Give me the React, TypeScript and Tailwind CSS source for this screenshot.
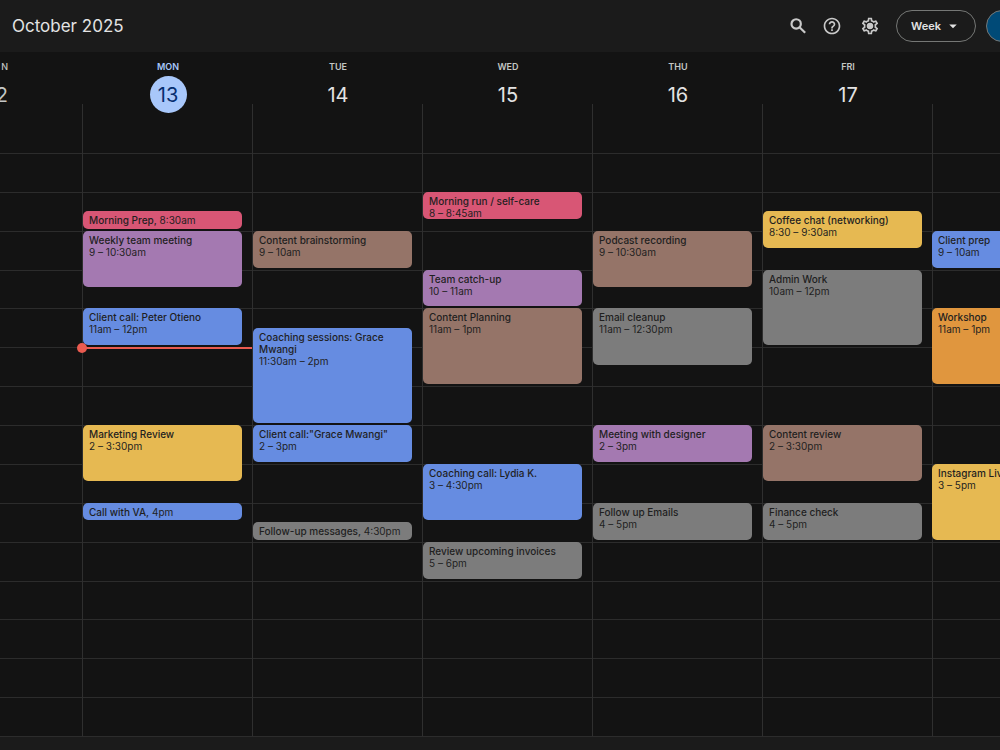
import { MdArrowDropDown, MdHelpOutline, MdOutlineSettings } from 'react-icons/md';

type Color = 'red' | 'purple' | 'blue' | 'brown' | 'gray' | 'yellow' | 'orange';

interface CalendarEvent {
    day: number;
    start: number;
    end: number;
    title: string;
    time: string;
    color: Color;
}

const colors: Record<Color, string> = {
    red: 'bg-[#d85675]',
    purple: 'bg-[#a479b1]',
    blue: 'bg-[#668ce1]',
    brown: 'bg-[#957468]',
    gray: 'bg-[#7c7c7c]',
    yellow: 'bg-[#e6b952]',
    orange: 'bg-[#e0963e]',
};

const days = [
    { name: 'MON', date: 13, today: true },
    { name: 'TUE', date: 14 },
    { name: 'WED', date: 15 },
    { name: 'THU', date: 16 },
    { name: 'FRI', date: 17 },
];

// day is the grid column: 1 = Sunday ... 7 = Saturday
const events: CalendarEvent[] = [
    { day: 2, start: 8.5, end: 9, title: 'Morning Prep', time: '8:30am', color: 'red' },
    { day: 2, start: 9, end: 10.5, title: 'Weekly team meeting', time: '9 – 10:30am', color: 'purple' },
    { day: 2, start: 11, end: 12, title: 'Client call: Peter Otieno', time: '11am – 12pm', color: 'blue' },
    { day: 2, start: 14, end: 15.5, title: 'Marketing Review', time: '2 – 3:30pm', color: 'yellow' },
    { day: 2, start: 16, end: 16.5, title: 'Call with VA', time: '4pm', color: 'blue' },
    { day: 3, start: 9, end: 10, title: 'Content brainstorming', time: '9 – 10am', color: 'brown' },
    { day: 3, start: 11.5, end: 14, title: 'Coaching sessions: Grace Mwangi', time: '11:30am – 2pm', color: 'blue' },
    { day: 3, start: 14, end: 15, title: 'Client call:"Grace Mwangi"', time: '2 – 3pm', color: 'blue' },
    { day: 3, start: 16.5, end: 17, title: 'Follow-up messages', time: '4:30pm', color: 'gray' },
    { day: 4, start: 8, end: 8.75, title: 'Morning run / self-care', time: '8 – 8:45am', color: 'red' },
    { day: 4, start: 10, end: 11, title: 'Team catch-up', time: '10 – 11am', color: 'purple' },
    { day: 4, start: 11, end: 13, title: 'Content Planning', time: '11am – 1pm', color: 'brown' },
    { day: 4, start: 15, end: 16.5, title: 'Coaching call: Lydia K.', time: '3 – 4:30pm', color: 'blue' },
    { day: 4, start: 17, end: 18, title: 'Review upcoming invoices', time: '5 – 6pm', color: 'gray' },
    { day: 5, start: 9, end: 10.5, title: 'Podcast recording', time: '9 – 10:30am', color: 'brown' },
    { day: 5, start: 11, end: 12.5, title: 'Email cleanup', time: '11am – 12:30pm', color: 'gray' },
    { day: 5, start: 14, end: 15, title: 'Meeting with designer', time: '2 – 3pm', color: 'purple' },
    { day: 5, start: 16, end: 17, title: 'Follow up Emails', time: '4 – 5pm', color: 'gray' },
    { day: 6, start: 8.5, end: 9.5, title: 'Coffee chat (networking)', time: '8:30 – 9:30am', color: 'yellow' },
    { day: 6, start: 10, end: 12, title: 'Admin Work', time: '10am – 12pm', color: 'gray' },
    { day: 6, start: 14, end: 15.5, title: 'Content review', time: '2 – 3:30pm', color: 'brown' },
    { day: 6, start: 16, end: 17, title: 'Finance check', time: '4 – 5pm', color: 'gray' },
    { day: 7, start: 9, end: 10, title: 'Client prep', time: '9 – 10am', color: 'blue' },
    { day: 7, start: 11, end: 13, title: 'Workshop', time: '11am – 1pm', color: 'orange' },
    { day: 7, start: 15, end: 17, title: 'Instagram Live', time: '3 – 5pm', color: 'yellow' },
];

const FIRST_HOUR = 7;
const hours = Array.from({ length: 15 }, (_, i) => FIRST_HOUR + i);

// Row 1 is the strip above the first hour, then four rows per hour
const rowOf = (hour: number) => (hour - FIRST_HOUR) * 4 + 2;

const columns = 'grid grid-cols-[minmax(0,82fr)_repeat(5,minmax(0,170fr))_minmax(0,68fr)]';

const SearchIcon = () => (
    <svg viewBox="0 0 24 24" className="h-5 w-5 fill-none stroke-current" strokeWidth="2.6">
        <circle cx="9.8" cy="9.5" r="5.6" />
        <path d="M13.8 13.5 20.6 20.2" />
    </svg>
);

const Header = () => (
    <header className="flex h-[52px] shrink-0 items-center overflow-hidden bg-[#1b1b1b] pl-3 text-[#e3e3e3]">
        <h1 className="pt-0.5 text-[17px]">October 2025</h1>
        <div className="ml-auto flex shrink-0 items-center">
            <button type="button" aria-label="Search" className="mr-3.5 text-[#c9c9c9]">
                <SearchIcon />
            </button>
            <button type="button" aria-label="Help" className="mr-[18px] text-[#c9c9c9]">
                <MdHelpOutline size={20} />
            </button>
            <button type="button" aria-label="Settings" className="relative mr-4 text-[#c9c9c9]">
                <MdOutlineSettings size={20} />
                <span className="absolute inset-[7px] rounded-full bg-current" />
            </button>
            <div className="relative mr-2.5">
                <select
                    aria-label="View"
                    defaultValue="Week"
                    className="h-8 w-20 appearance-none rounded-full border border-[#757775] bg-transparent pl-3.5 text-[11px] font-semibold"
                >
                    <option>Day</option>
                    <option>Week</option>
                    <option>Month</option>
                </select>
                <MdArrowDropDown size={18} className="pointer-events-none absolute top-[7px] right-3.5" />
            </div>
            <button
                type="button"
                aria-label="Calendar view"
                className="-mr-[18px] h-8 w-8 rounded-full border border-[#757775] bg-[#004a77]"
            />
        </div>
    </header>
);

const DayHeader = () => (
    <div className={`${columns} h-[52px] shrink-0 pt-2 text-[#e3e3e3]`}>
        <div className="flex flex-col items-end text-[#c4c7c5]">
            <span className="mr-[74px] text-[9px] leading-[13px] font-medium">N</span>
            <span className="mt-[3px] mr-[74px] flex h-[37px] shrink-0 items-center text-xl">2</span>
        </div>
        {days.map((day) => (
            <div key={day.name} className="flex flex-col items-center pl-0.5">
                <span
                    className={`text-[9px] leading-[13px] font-semibold ${
                        day.today ? 'text-[#a8c7fa]' : 'text-[#c4c7c5]'
                    }`}
                >
                    {day.name}
                </span>
                <span
                    className={`mt-[3px] flex h-[37px] w-[37px] shrink-0 items-center justify-center rounded-full text-xl ${
                        day.today ? 'bg-[#a8c7fa] text-[#062e6f]' : ''
                    }`}
                >
                    {day.date}
                </span>
            </div>
        ))}
    </div>
);

const EventCard = ({ event }: { event: CalendarEvent }) => {
    const short = event.end - event.start <= 0.5;
    const lastDay = event.day === 7;

    return (
        <button
            type="button"
            className={`z-10 mb-0.5 flex min-h-0 flex-col items-start overflow-hidden pt-[3px] pl-1.5 text-left text-[10px] leading-3 text-[#1f1f1f] ${
                colors[event.color]
            } ${lastDay ? 'rounded-l-[5px] whitespace-nowrap' : 'mr-2.5 ml-px rounded-[5px] pr-1.5'}`}
            style={{ gridColumn: event.day, gridRow: `${rowOf(event.start)} / ${rowOf(event.end)}` }}
        >
            {short ? (
                <span className="whitespace-nowrap">
                    <span className="font-medium">{event.title},</span> {event.time}
                </span>
            ) : (
                <>
                    <span className="font-medium">{event.title}</span>
                    <span>{event.time}</span>
                </>
            )}
        </button>
    );
};

export default function App() {
    return (
        <div className="flex h-screen flex-col overflow-hidden bg-[#1b1b1b] font-['Inter','Liberation_Sans',sans-serif]">
            <Header />
            <main className="flex min-h-0 flex-1 flex-col bg-[#131313]">
                <DayHeader />
                <div className={`${columns} min-h-0 flex-1 grid-rows-[49px_repeat(60,minmax(0,1fr))]`}>
                    {hours.map((hour) => (
                        <div
                            key={hour}
                            className="col-span-full border-t border-[#2c2c2c]"
                            style={{ gridRow: `${rowOf(hour)} / span 4` }}
                        />
                    ))}
                    {[2, 3, 4, 5, 6, 7].map((day) => (
                        <div
                            key={day}
                            className="row-span-full border-l border-[#2f2f2f]"
                            style={{ gridColumn: day }}
                        />
                    ))}
                    {events.map((event) => (
                        <EventCard key={`${event.day}-${event.start}`} event={event} />
                    ))}
                    {/* Current time */}
                    <div
                        className="relative z-20 h-0.5 bg-[#ea5b50]"
                        style={{ gridColumn: 2, gridRow: rowOf(12) }}
                    >
                        <span className="absolute -top-1 -left-[5px] h-2.5 w-2.5 rounded-full bg-[#ea5b50]" />
                    </div>
                </div>
            </main>
            <footer className="h-3.5 shrink-0 border-t border-[#2c2c2c]" />
        </div>
    );
}
